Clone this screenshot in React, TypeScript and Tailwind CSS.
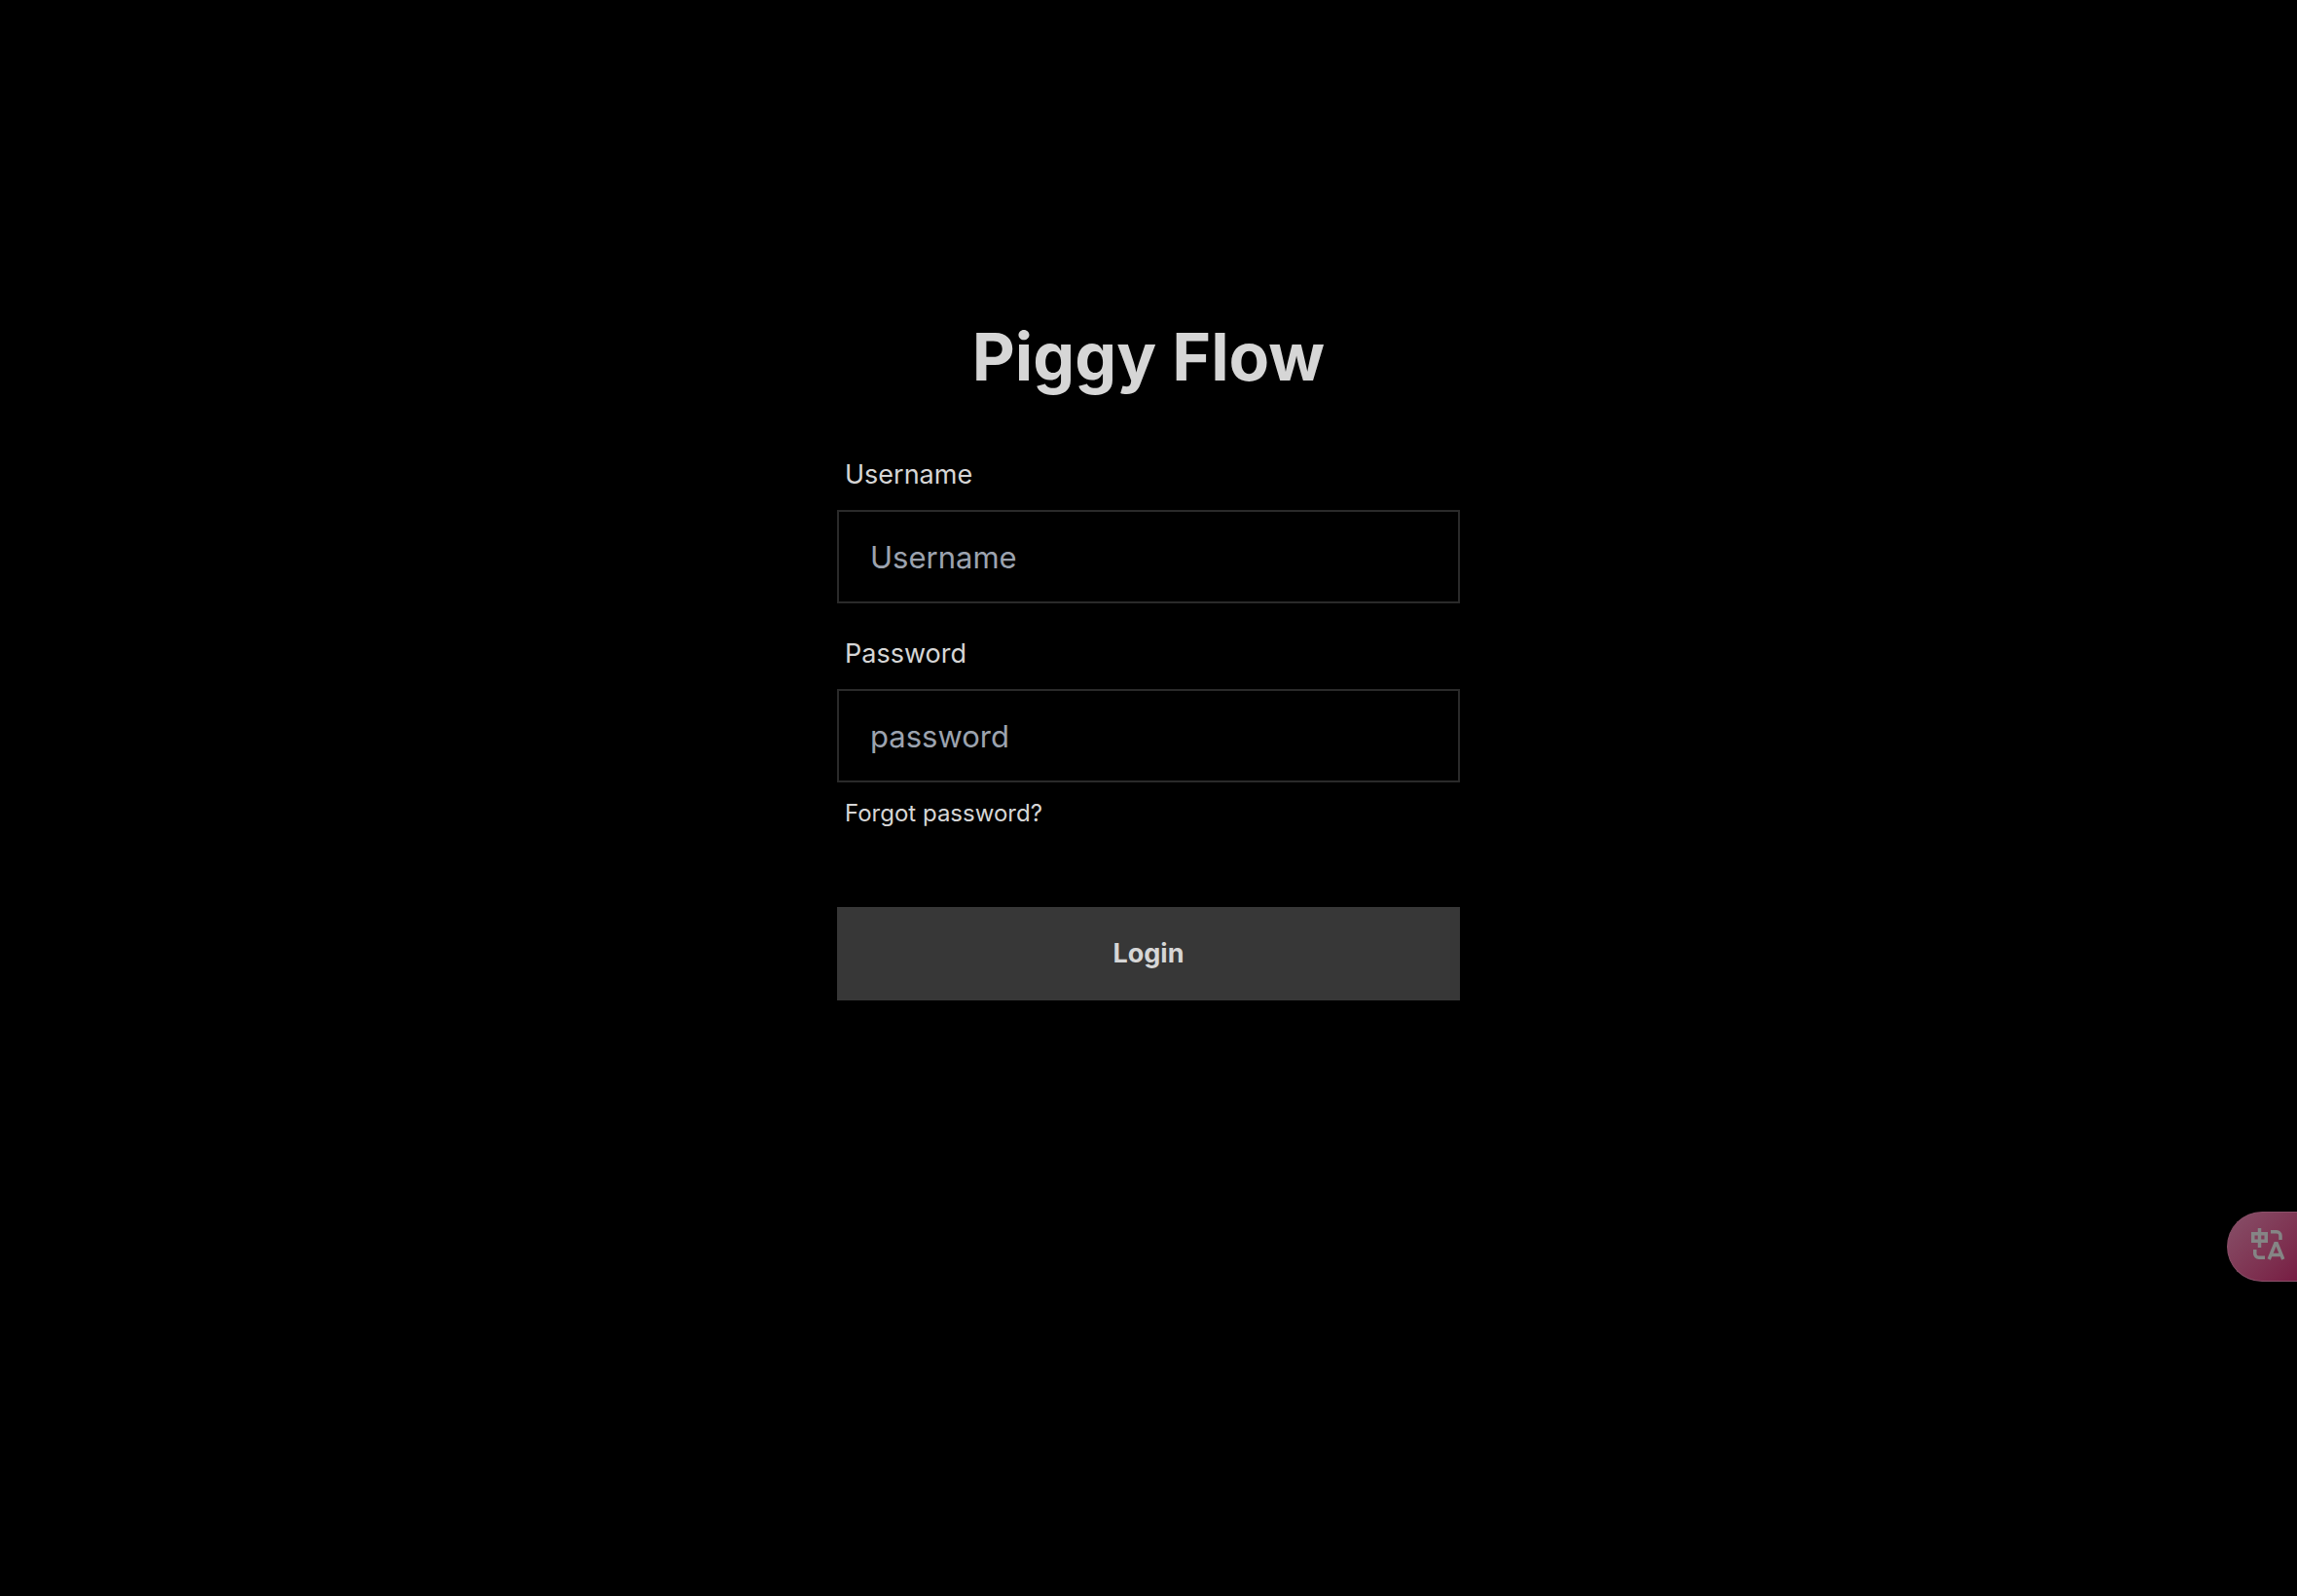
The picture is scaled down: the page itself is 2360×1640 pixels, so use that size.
import React from "react";

function Field({ id, label, type, placeholder }: { id: string; label: string; type: string; placeholder: string }) {
  return (
    <div className="flex flex-col gap-4">
      <label htmlFor={id} className="px-2 text-[27px] leading-10">
        {label}
      </label>
      <input
        id={id}
        name={id}
        type={type}
        placeholder={placeholder}
        className="h-24 w-full border-2 border-[#2a2a2a] bg-black px-8 text-[31px] outline-none placeholder:text-[#9ca3af] placeholder:opacity-100"
      />
    </div>
  );
}

function TranslateIcon() {
  return (
    <svg viewBox="0 0 36 40" className="h-10 w-9" fill="none" stroke="#858585" strokeWidth="3.5" aria-hidden="true">
      <path d="M1.75 6.75h13.5v7.5H1.75zM8.5 1v20" />
      <path d="M20 4.75h6a4 4 0 0 1 4 4V13" />
      <path d="M3.75 23v4.25a4 4 0 0 0 4 4H14" />
      <path d="M18.2 33 24.8 16.8h1.4L32.8 33M20.5 28.5h10" />
    </svg>
  );
}

export default function App() {
  return (
    <div className="min-h-screen bg-black font-['Inter',sans-serif] text-[#d6d6d6]">
      <main className="mx-auto flex w-full max-w-[640px] flex-col pt-[20vh]">
        <h1 className="text-center text-[68px] leading-[76px] font-bold">Piggy Flow</h1>
        <form className="mt-16 flex flex-col" onSubmit={(e) => e.preventDefault()}>
          <div className="flex flex-col gap-8">
            <Field id="username" label="Username" type="text" placeholder="Username" />
            <Field id="password" label="Password" type="password" placeholder="password" />
          </div>
          <a href="#forgot" className="mt-4 self-start px-2 text-2xl">
            Forgot password?
          </a>
          <button type="submit" className="mt-20 h-24 w-full bg-[#373737] text-[27px] font-bold">
            Login
          </button>
        </form>
      </main>
      <button
        type="button"
        aria-label="Translate"
        className="fixed right-0 bottom-[323px] flex h-18 w-18 items-center rounded-l-full border border-r-0 border-[#8a5069] bg-linear-to-br from-[#875069] to-[#771c43] pl-6"
      >
        <TranslateIcon />
      </button>
    </div>
  );
}
